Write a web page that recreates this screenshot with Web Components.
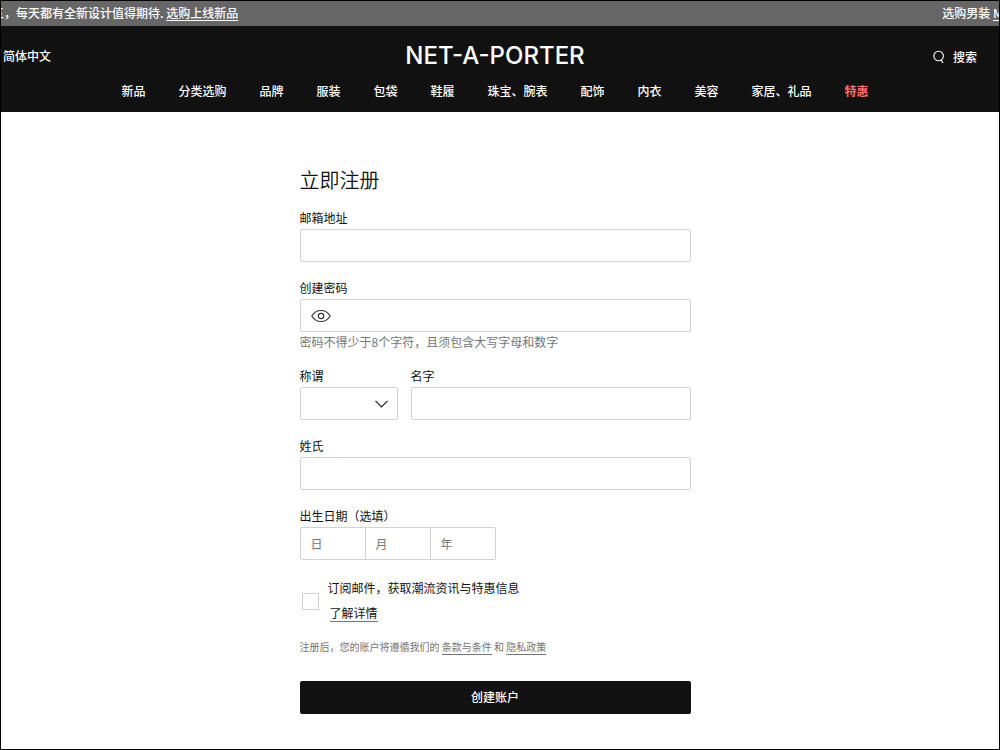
<!DOCTYPE html>
<html lang="zh-Hans">
<head>
<meta charset="utf-8">
<meta name="viewport" content="width=device-width, initial-scale=1">
<title>立即注册 | NET-A-PORTER</title>
<style>
  html { background: #fff; }
  body {
    margin: 0; box-sizing: border-box; min-height: 100vh; border: 1px solid #000;
    font: 12px/16px "Noto Sans CJK SC", sans-serif; color: #111;
    --ink: #111; --line: #d2d2d2; --muted: #757575;
  }
</style>
</head>
<body>
<promo-bar></promo-bar>
<site-header></site-header>
<register-form></register-form>

<script>
const define = (name, html, setup) => {
  const template = document.createElement('template');
  template.innerHTML = html;
  customElements.define(name, class extends HTMLElement {
    constructor() {
      super();
      this.attachShadow({ mode: 'open' }).append(template.content.cloneNode(true));
    }
    connectedCallback() { if (setup) setup(this, this.shadowRoot); }
  });
};

define('promo-bar', `
  <style>
    :host { display: flex; justify-content: space-between; overflow: hidden; white-space: nowrap;
      background: #666; color: #fff; font-weight: 500; padding: 4px 0 5px; }
    p { margin: 0; }
    .news { margin-left: -9px; }
    .men { margin-right: -4px; }
    a { color: inherit; text-underline-offset: 2px; }
  </style>
  <p class="news">五，每天都有全新设计值得期待. <a href="#new">选购上线新品</a></p>
  <p class="men">选购男装 <a href="#men">M</a></p>`);

define('nav-link', `
  <style>
    :host { display: block; }
    a { color: inherit; text-decoration: none; }
  </style>
  <a><slot></slot></a>`,
  (el, root) => { root.querySelector('a').href = el.getAttribute('to') || '#'; });

define('site-header', `
  <style>
    :host { display: block; background: var(--ink); color: #fff; font-weight: 500; padding: 16px 10px 13px 0; }
    .top { display: grid; grid-template-columns: 1fr auto 1fr; align-items: center; }
    .language { padding-left: 2px; }
    .logo { font: 500 24px/28px Inter, sans-serif; color: inherit; text-decoration: none; }
    .search { justify-self: end; display: flex; align-items: center; gap: 8px; margin: 2px 12px 0 0; padding: 0;
      border: 0; background: none; color: inherit; font: inherit; cursor: pointer; }
    svg { display: block; }
    nav { display: flex; flex-wrap: wrap; justify-content: center; column-gap: 33px; row-gap: 8px; margin-top: 13px; }
    .sale { color: #ff6f69; font-weight: 700; }
  </style>
  <div class="top">
    <nav-link class="language" to="#language">简体中文</nav-link>
    <a class="logo" href="#home">NET-A-PORTER</a>
    <button class="search" type="button">
      <svg width="12" height="14" viewBox="0 0 12 14" fill="none" stroke="#fff" stroke-width="1.1" aria-hidden="true">
        <circle cx="5.6" cy="6" r="4.8"/><path d="M7.8 9.9l2.3 3"/>
      </svg>搜索</button>
  </div>
  <nav aria-label="主导航">
    <nav-link>新品</nav-link><nav-link>分类选购</nav-link><nav-link>品牌</nav-link><nav-link>服装</nav-link>
    <nav-link>包袋</nav-link><nav-link>鞋履</nav-link><nav-link>珠宝、腕表</nav-link><nav-link>配饰</nav-link>
    <nav-link>内衣</nav-link><nav-link>美容</nav-link><nav-link>家居、礼品</nav-link><nav-link class="sale">特惠</nav-link>
  </nav>`);

define('text-field', `
  <style>
    :host { display: block; }
    label { display: block; margin-bottom: 3px; }
    .box { display: flex; align-items: center; box-sizing: border-box; height: 33px;
      border: 1px solid var(--line); border-radius: 2px; background: #fff; }
    input { flex: 1; min-width: 0; height: 100%; box-sizing: border-box; border: 0; padding: 0 10px;
      background: none; font: inherit; color: inherit; }
    ::slotted(button) { margin-left: 10px; }
  </style>
  <label for="input"></label>
  <div class="box"><slot name="before"></slot><input id="input"></div>
  <slot></slot>`,
  (el, root) => {
    root.querySelector('label').textContent = el.getAttribute('label');
    root.querySelector('input').type = el.getAttribute('type') || 'text';
  });

define('select-field', `
  <style>
    :host { display: block; }
    label { display: block; margin-bottom: 3px; }
    .box { display: grid; align-items: center; }
    select, svg { grid-area: 1 / 1; }
    select { appearance: none; width: 100%; height: 33px; border: 1px solid var(--line); border-radius: 2px;
      background: #fff; padding: 0 30px 0 10px; font: inherit; color: inherit; }
    svg { justify-self: end; margin-right: 10px; pointer-events: none; }
  </style>
  <label for="select">称谓</label>
  <div class="box">
    <select id="select"><option value=""></option></select>
    <svg width="13" height="8" viewBox="0 0 13 8" fill="none" stroke="#222" stroke-width="1.2" aria-hidden="true"><path d="M.5 .8l6 6 6-6"/></svg>
  </div>`);

define('birth-date', `
  <style>
    :host { display: block; }
    fieldset { border: 0; margin: 0; padding: 0; min-width: 0; }
    legend { padding: 0; margin-bottom: 3px; }
    .parts { display: flex; }
    input { box-sizing: border-box; width: 66px; height: 33px; border: 1px solid var(--line);
      padding: 0 10px; font: inherit; color: inherit; background: #fff; }
    input + input { margin-left: -1px; }
    input:first-child { border-radius: 2px 0 0 2px; }
    input:last-child { border-radius: 0 2px 2px 0; }
    input::placeholder { color: var(--muted); opacity: 1; }
  </style>
  <fieldset>
    <legend>出生日期（选填）</legend>
    <div class="parts">
      <input aria-label="日" placeholder="日" inputmode="numeric">
      <input aria-label="月" placeholder="月" inputmode="numeric">
      <input aria-label="年" placeholder="年" inputmode="numeric">
    </div>
  </fieldset>`);

define('opt-in', `
  <style>
    :host { display: flex; align-items: center; gap: 9px; }
    input { appearance: none; flex: none; width: 17px; height: 17px; margin: 0 0 0 2px;
      border: 1px solid var(--line); background: #fff; }
    input:checked { background: var(--ink); }
    label { display: block; margin-bottom: 9px; }
    a { display: inline-block; margin-left: 2px; color: inherit; text-decoration: none; border-bottom: 1px solid #777; }
  </style>
  <input type="checkbox" id="news">
  <div>
    <label for="news">订阅邮件，获取潮流资讯与特惠信息</label>
    <a href="#details">了解详情</a>
  </div>`);

define('register-form', `
  <style>
    :host { display: block; padding: 54px 10px 35px 0; }
    form { max-width: 391px; margin: 0 auto; }
    h1 { margin: 0 0 16px; font-size: 20px; line-height: 28px; font-weight: 350; }
    .fields { display: grid; gap: 18px; }
    .names { display: grid; grid-template-columns: 98px 1fr; gap: 13px; }
    .eye { display: block; padding: 0; border: 0; background: none; cursor: pointer; }
    svg { display: block; }
    .hint { margin: 2px 0 0; color: var(--muted); }
    opt-in { margin-top: 2px; }
    .terms { margin: 17px 0 26px; font-size: 10px; color: var(--muted); }
    .terms a { display: inline-block; line-height: 14px; color: inherit; text-decoration: none; border-bottom: 1px solid #777; }
    .submit { display: block; width: 100%; height: 33px; border: 0; border-radius: 2px; padding: 0 0 2px;
      background: var(--ink); color: #fff; font: inherit; font-weight: 500; cursor: pointer; }
  </style>
  <form>
    <h1>立即注册</h1>
    <div class="fields">
      <text-field label="邮箱地址" type="email"></text-field>
      <text-field label="创建密码" type="password">
        <button class="eye" slot="before" type="button" aria-label="显示密码">
          <svg width="20" height="14" viewBox="0 0 20 14" fill="none" stroke="#333" stroke-width="1.2">
            <path d="M.8 7C3 3.4 6.2 1.5 10 1.5S17 3.4 19.2 7C17 10.6 13.8 12.500 10 12.500S3 10.6.8 7z"/><circle cx="10" cy="7" r="2.7"/>
          </svg>
        </button>
        <p class="hint">密码不得少于8个字符，且须包含大写字母和数字</p>
      </text-field>
      <div class="names"><select-field></select-field><text-field label="名字"></text-field></div>
      <text-field label="姓氏"></text-field>
      <birth-date></birth-date>
      <opt-in></opt-in>
    </div>
    <p class="terms">注册后，您的账户将遵循我们的 <a href="#terms">条款与条件</a> 和 <a href="#privacy">隐私政策</a></p>
    <button class="submit" type="button">创建账户</button>
  </form>`);
</script>
</body>
</html>
